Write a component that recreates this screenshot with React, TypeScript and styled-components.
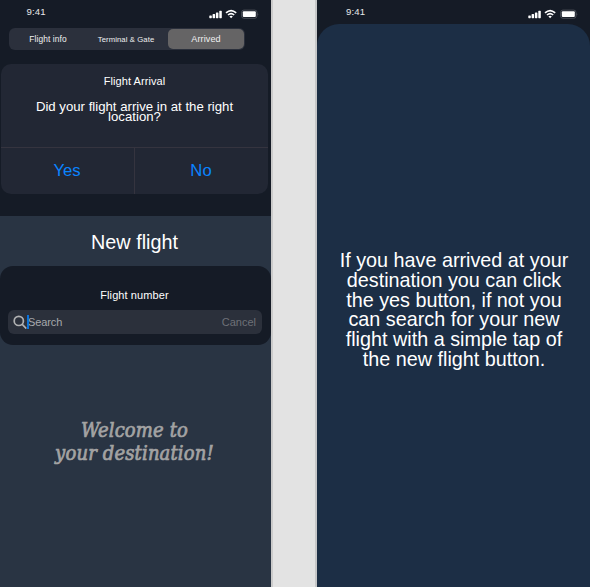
import React from "react";
import styled, { createGlobalStyle } from "styled-components";

const GlobalStyle = createGlobalStyle`
  *, *::before, *::after { box-sizing: border-box; }
  html, body { margin: 0; padding: 0; }
  body {
    overflow: hidden;
    font-family: "Liberation Sans", Arial, sans-serif;
    color: #fff;
  }
  button, input { font-family: inherit; border: 0; padding: 0; margin: 0; background: none; }
`;

const Board = styled.main`
  display: flex;
  justify-content: space-between;
  width: 590px;
  height: 587px;
  overflow: hidden;
  background: #e3e3e3;
`;

const Phone = styled.section<{ $side: "left" | "right" }>`
  display: flex;
  flex-direction: column;
  width: ${(p) => (p.$side === "left" ? 273 : 275)}px;
  height: 587px;
  background: #151b26;
  ${(p) =>
    p.$side === "left"
      ? "border-right: 2px solid #cbcbcb;"
      : "border-left: 2px solid #c6c7c8;"}
`;

const StatusBar = styled.header<{ $indent: number }>`
  flex: none;
  display: flex;
  justify-content: space-between;
  height: 24px;
  padding: 6px 12px 0 ${(p) => p.$indent}px;
`;

const Clock = styled.time`
  font-size: 9.6px;
  line-height: 12px;
  letter-spacing: 0.15px;
  color: #e8e9ea;
`;

const Indicators = styled.svg`
  display: block;
  margin-top: 3px;
`;

const Tabs = styled.nav`
  flex: none;
  display: grid;
  grid-template-columns: 76px 1fr 76px;
  width: 236px;
  height: 22px;
  margin: 4px 0 0 9px;
  padding: 1px;
  border-radius: 6px;
  background: #2b303c;
`;

const Tab = styled.button<{ $active?: boolean; $size: number }>`
  padding-right: ${(p) => (p.$active ? 0 : 2)}px;
  font-size: ${(p) => p.$size}px;
  line-height: 19px;
  letter-spacing: 0.1px;
  color: #f0f0f1;
  white-space: nowrap;
  border-radius: 5px;
  background: ${(p) => (p.$active ? "#656465" : "transparent")};
  &:first-child { padding-right: 0; }
`;

const AlertCard = styled.section`
  flex: none;
  display: flex;
  flex-direction: column;
  width: 267px;
  height: 130px;
  margin: 14px 0 0 1px;
  border-radius: 10px;
  background: #222734;
  text-align: center;
`;

const AlertTitle = styled.h2`
  margin: 10px 0 0;
  font-size: 11px;
  line-height: 14px;
  letter-spacing: 0.08px;
  font-weight: 400;
`;

const AlertText = styled.p`
  margin: 14px 0 0;
  font-size: 13.2px;
  line-height: 10px;
`;

const AlertActions = styled.div`
  display: flex;
  height: 47px;
  margin-top: auto;
  border-top: 1px solid #35343f;
`;

const AlertButton = styled.button`
  flex: 1;
  padding-right: 1px;
  font-size: 16.7px;
  line-height: 46px;
  color: #0a84ff;
  & + & { border-left: 1px solid #35343f; }
`;

const FlightArea = styled.section`
  flex: 1;
  margin-top: 22px;
  background: #293443;
  text-align: center;
`;

const FlightHeading = styled.h1`
  height: 50px;
  margin: 0;
  padding-right: 2px;
  font-size: 19.8px;
  line-height: 52px;
  font-weight: 400;
`;

const SearchPanel = styled.div`
  height: 79px;
  padding: 22px 9px 0 8px;
  border-radius: 13px;
  background: #151b26;
`;

const FieldLabel = styled.label`
  display: block;
  height: 22px;
  padding-right: 1px;
  font-size: 11px;
  line-height: 14px;
  letter-spacing: 0.1px;
`;

const SearchField = styled.div`
  display: flex;
  align-items: center;
  height: 24px;
  padding: 0 6px 0 5px;
  border-radius: 6px;
  background: #2b303b;
  font-size: 11px;
  line-height: 24px;
`;

const Caret = styled.i`
  width: 1.5px;
  height: 14px;
  background: #0a72dc;
`;

const Placeholder = styled.span`
  margin-left: -0.5px;
  letter-spacing: -0.1px;
  color: #a6a8ab;
`;

const Cancel = styled.button`
  margin-left: auto;
  font-size: 11px;
  line-height: 24px;
  color: #6e7178;
`;

const Welcome = styled.p`
  margin: 74px 0 0;
  padding-right: 2px;
  font-family: "DejaVu Serif Condensed", "DejaVu Serif", serif;
  font-stretch: condensed;
  font-size: 20px;
  font-style: italic;
  font-weight: 400;
  line-height: 23px;
  letter-spacing: 0.15px;
  color: #a3a3a3;
  -webkit-text-stroke: 0.7px #a3a3a3;
`;

const HelpSheet = styled.section`
  flex: 1;
  padding-top: 227px;
  border-radius: 22px 22px 0 0;
  background: #1c2e45;
`;

const HelpText = styled.p`
  margin: 0;
  padding-left: 1px;
  font-size: 19.8px;
  line-height: 19.8px;
  text-align: center;
  white-space: nowrap;
`;

function StatusIndicators() {
  return (
    <Indicators width="50" height="11" viewBox="0 0 50 11" fill="#fff" aria-hidden="true">
      <rect x="0.3" y="6.5" width="2.5" height="2.7" rx="0.6" />
      <rect x="3.6" y="5.1" width="2.5" height="4.1" rx="0.6" />
      <rect x="6.9" y="3.5" width="2.5" height="5.7" rx="0.6" />
      <rect x="10.3" y="1.8" width="2.5" height="7.4" rx="0.6" />
      <g fill="none" stroke="#fff" strokeWidth="1.6">
        <path d="M17 3.9Q22.1 -0.8 27.2 3.9" />
        <path d="M19 6Q22.1 3.2 25.2 6" />
      </g>
      <path d="M20.4 7.4Q22.1 6.1 23.8 7.4L22.1 9.2Z" />
      <rect x="32.6" y="1.1" width="15.4" height="8.2" rx="2.3" fill="none" stroke="#555962" strokeWidth="0.8" />
      <rect x="33.8" y="2.3" width="13" height="5.8" rx="1" />
      <path d="M48.7 3.9Q50 5.2 48.7 6.5Z" fill="#666a72" />
    </Indicators>
  );
}

function SearchIcon() {
  return (
    <svg width="14" height="14" viewBox="0 0 14 14" fill="none" stroke="#b1b2b3" strokeWidth="1.7" aria-hidden="true">
      <circle cx="5.8" cy="5.9" r="4.6" />
      <path d="M9 9.2L13.3 13.5" />
    </svg>
  );
}

const helpLines = [
  "If you have arrived at your",
  "destination you can click",
  "the yes button, if not you",
  "can search for your new",
  "flight with a simple tap of",
  "the new flight button.",
];

export default function App() {
  return (
    <>
      <GlobalStyle />
      <Board>
        <Phone $side="left">
          <StatusBar $indent={26.5}>
            <Clock>9:41</Clock>
            <StatusIndicators />
          </StatusBar>
          <Tabs>
            <Tab $size={8.4}>Flight info</Tab>
            <Tab $size={7.7}>Terminal &amp; Gate</Tab>
            <Tab $size={9.1} $active>Arrived</Tab>
          </Tabs>
          <AlertCard>
            <AlertTitle>Flight Arrival</AlertTitle>
            <AlertText>
              Did your flight arrive in at the right
              <br />
              location?
            </AlertText>
            <AlertActions>
              <AlertButton>Yes</AlertButton>
              <AlertButton>No</AlertButton>
            </AlertActions>
          </AlertCard>
          <FlightArea>
            <FlightHeading>New flight</FlightHeading>
            <SearchPanel>
              <FieldLabel>Flight number</FieldLabel>
              <SearchField>
                <SearchIcon />
                <Caret />
                <Placeholder>Search</Placeholder>
                <Cancel>Cancel</Cancel>
              </SearchField>
            </SearchPanel>
            <Welcome>
              Welcome to
              <br />
              your destination!
            </Welcome>
          </FlightArea>
        </Phone>
        <Phone $side="right">
          <StatusBar $indent={29}>
            <Clock>9:41</Clock>
            <StatusIndicators />
          </StatusBar>
          <HelpSheet>
            <HelpText>
              {helpLines.map((line) => (
                <React.Fragment key={line}>
                  {line}
                  <br />
                </React.Fragment>
              ))}
            </HelpText>
          </HelpSheet>
        </Phone>
      </Board>
    </>
  );
}
